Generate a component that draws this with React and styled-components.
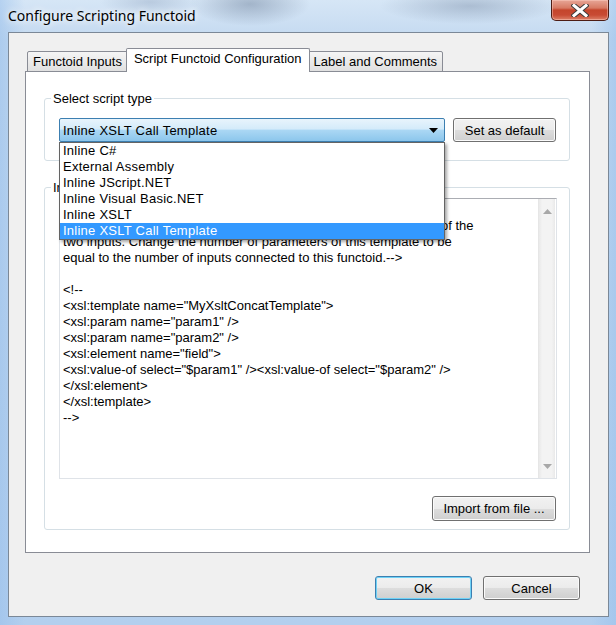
import React from "react";
import styled, { createGlobalStyle, css } from "styled-components";

const GlobalStyle = createGlobalStyle`
  html, body {
    margin: 0;
    padding: 0;
  }
  body {
    width: 616px;
    height: 625px;
    overflow: hidden;
    font-family: "Liberation Sans", Arial, sans-serif;
    font-size: 13px;
    color: #000;
  }
`;

const scriptTypes = [
  "Inline C#",
  "External Assembly",
  "Inline JScript.NET",
  "Inline Visual Basic.NET",
  "Inline XSLT",
  "Inline XSLT Call Template",
];

const scriptLines = [
  "<!--",
  "This is an example of a template which returns the concatenation of the",
  "two inputs. Change the number of parameters of this template to be",
  "equal to the number of inputs connected to this functoid.-->",
  "",
  "<!--",
  '<xsl:template name="MyXsltConcatTemplate">',
  '<xsl:param name="param1" />',
  '<xsl:param name="param2" />',
  '<xsl:element name="field">',
  '<xsl:value-of select="$param1" /><xsl:value-of select="$param2" />',
  "</xsl:element>",
  "</xsl:template>",
  "-->",
];

const tabs = ["Functoid Inputs", "Script Functoid Configuration", "Label and Comments"];

export default function App() {
  const selected = "Inline XSLT Call Template";
  return (
    <>
      <GlobalStyle />
      <Window>
        <TitleBar>
          <Title>Configure Scripting Functoid</Title>
          <CloseButton>
            <svg width="18" height="13" viewBox="0 0 18 13">
              <path
                d="M3 1.5 L15 11.5 M15 1.5 L3 11.5"
                stroke="#3b3b3b"
                strokeWidth="5"
                strokeLinecap="square"
              />
              <path
                d="M3 1.5 L15 11.5 M15 1.5 L3 11.5"
                stroke="#ffffff"
                strokeWidth="3"
                strokeLinecap="square"
              />
            </svg>
          </CloseButton>
        </TitleBar>

        <Client>
          <TabStrip>
            {tabs.map((t, i) => (
              <Tab key={t} active={i === 1}>
                {t}
              </Tab>
            ))}
          </TabStrip>
          <TabPage>
            <Group>
              <Legend>Select script type</Legend>
              <GroupBody top={12} bottom={18}>
                <ComboRow>
                  <ComboWrap>
                    <Combo>
                      <span>{selected}</span>
                      <svg width="9" height="5" viewBox="0 0 9 5">
                        <polygon points="0,0 9,0 4.5,5" fill="#000" />
                      </svg>
                    </Combo>
                    <DropList>
                      {scriptTypes.map((s) => (
                        <DropItem key={s} active={s === selected}>
                          {s}
                        </DropItem>
                      ))}
                    </DropList>
                  </ComboWrap>
                  <Button width={103} height={24}>
                    Set as default
                  </Button>
                </ComboRow>
              </GroupBody>
            </Group>

            <Group spaced>
              <Legend>Inline script buffer</Legend>
              <GroupBody top={3} bottom={8}>
                <ScriptBox>
                  <ScriptText>
                    {scriptLines.map((l, i) => (
                      <Line key={i}>{l || "\u00a0"}</Line>
                    ))}
                  </ScriptText>
                  <ScrollBar>
                    <svg width="9" height="5" viewBox="0 0 9 5">
                      <polygon points="0,5 4.5,0 9,5" fill="#a8a8a8" />
                    </svg>
                    <svg width="9" height="5" viewBox="0 0 9 5">
                      <polygon points="0,0 9,0 4.5,5" fill="#a8a8a8" />
                    </svg>
                  </ScrollBar>
                </ScriptBox>
                <ImportRow>
                  <Button width={124} height={25}>
                    Import from file ...
                  </Button>
                </ImportRow>
              </GroupBody>
            </Group>
          </TabPage>

          <DialogButtons>
            <Button width={97} height={24} isDefault>
              OK
            </Button>
            <Button width={97} height={24}>
              Cancel
            </Button>
          </DialogButtons>
        </Client>
      </Window>
    </>
  );
}

const Window = styled.div`
  width: 616px;
  height: 625px;
  box-sizing: border-box;
  display: flex;
  flex-direction: column;
  background:
    radial-gradient(ellipse 60px 22px at 250px 4px, rgba(70, 90, 120, 0.35), transparent),
    radial-gradient(ellipse 90px 18px at 470px 6px, rgba(80, 100, 130, 0.3), transparent),
    radial-gradient(ellipse 50px 14px at 150px 2px, rgba(120, 140, 170, 0.3), transparent),
    linear-gradient(to right, rgba(150, 190, 235, 0.5), rgba(255, 255, 255, 0) 4%, rgba(255, 255, 255, 0) 96%, rgba(150, 190, 235, 0.5)),
    linear-gradient(to bottom, #d6e6f6 0px, #c3d9f0 40px, #b3cfee 100%);
`;

const TitleBar = styled.div`
  height: 32px;
  display: flex;
  align-items: flex-start;
  flex-shrink: 0;
`;

const Title = styled.div`
  margin: 7px 0 0 8px;
  font-family: "Noto Sans", "Open Sans", sans-serif;
  font-size: 14px;
  line-height: 18px;
  color: #000;
  text-shadow: 0 0 6px rgba(255, 255, 255, 0.95), 0 0 10px rgba(255, 255, 255, 0.8);
`;

const CloseButton = styled.div`
  margin-left: auto;
  margin-right: 7px;
  width: 58px;
  height: 21px;
  box-sizing: border-box;
  border: 1px solid #4d1d14;
  border-top: none;
  border-radius: 0 0 5px 5px;
  display: flex;
  align-items: center;
  justify-content: center;
  background: linear-gradient(
    to bottom,
    #e7a697 0%,
    #d77a64 40%,
    #c4452c 50%,
    #c84a33 75%,
    #dc8068 100%
  );
  box-shadow: inset 0 0 0 1px rgba(255, 210, 200, 0.45);
`;

const Client = styled.div`
  margin: 0 7px 8px 8px;
  flex: 1;
  box-sizing: border-box;
  border: 1px solid #7b8897;
  background: #f0f0f0;
  padding: 15px 18px 0 16px;
  display: flex;
  flex-direction: column;
`;

const TabStrip = styled.div`
  display: flex;
  align-items: flex-end;
  height: 24px;
  padding-left: 2px;
  margin-bottom: -1px;
  position: relative;
  z-index: 1;
`;

const Tab = styled.div`
  box-sizing: border-box;
  height: 21px;
  padding: 0 5px;
  border: 1px solid #898c95;
  border-radius: 2px 2px 0 0;
  line-height: 19px;
  white-space: nowrap;
  background: linear-gradient(to bottom, #f5f5f5, #e0e0e0);
  ${(p) =>
    p.active &&
    css`
      height: 24px;
      padding: 0 7px;
      margin: 0 -2px;
      border-bottom: none;
      background: #fff;
      line-height: 20px;
      position: relative;
      z-index: 2;
    `}
`;

const TabPage = styled.div`
  height: 482px;
  box-sizing: border-box;
  border: 1px solid #898c95;
  background: #fff;
  padding: 19px 19px 0 18px;
`;

const Group = styled.fieldset`
  margin: ${(p) => (p.spaced ? "19px" : "0")} 0 0 0;
  padding: 0;
  min-width: 0;
  border: 1px solid #d5dfe5;
  border-radius: 3px;
`;

const Legend = styled.legend`
  margin-left: 6px;
  padding: 0 2px;
  line-height: 15px;
  font-size: 13px;
`;

const GroupBody = styled.div`
  padding: ${(p) => p.top}px 12px ${(p) => p.bottom}px 14px;
`;

const ComboRow = styled.div`
  display: flex;
  gap: 8px;
`;

const ComboWrap = styled.div`
  position: relative;
  width: 386px;
  letter-spacing: 0.25px;
`;

const Combo = styled.div`
  box-sizing: border-box;
  height: 24px;
  border: 1px solid #3c7fb1;
  border-radius: 2px;
  padding: 0 6px 0 3px;
  display: flex;
  align-items: center;
  justify-content: space-between;
  background: linear-gradient(
    to bottom,
    #e8f4fc 0%,
    #d4ebfa 45%,
    #aad7f4 52%,
    #8cc6ec 100%
  );
`;

const DropList = styled.div`
  position: absolute;
  top: 100%;
  left: 0;
  width: 100%;
  box-sizing: border-box;
  border: 1px solid #646464;
  background: #fff;
  box-shadow: 2px 2px 3px rgba(0, 0, 0, 0.35);
  z-index: 5;
`;

const DropItem = styled.div`
  height: 16px;
  line-height: 16px;
  padding-left: 3px;
  white-space: nowrap;
  ${(p) =>
    p.active &&
    css`
      background: #3399ff;
      color: #fff;
    `}
`;

const Button = styled.div`
  box-sizing: border-box;
  width: ${(p) => p.width}px;
  height: ${(p) => p.height}px;
  flex-shrink: 0;
  border: 1px solid #707070;
  border-radius: 3px;
  display: flex;
  align-items: center;
  justify-content: center;
  white-space: nowrap;
  background: linear-gradient(
    to bottom,
    #f2f2f2 0%,
    #ebebeb 50%,
    #dddddd 51%,
    #cfcfcf 100%
  );
  box-shadow: inset 0 0 0 1px #fbfbfb;
  ${(p) =>
    p.isDefault &&
    css`
      border-color: #3c7fb1;
      box-shadow: inset 0 0 0 1px #6fd2f6;
    `}
`;

const ScriptBox = styled.div`
  box-sizing: border-box;
  width: 498px;
  height: 281px;
  display: flex;
  border: 1px solid #dfe3e8;
  border-top-color: #abadb3;
  background: #fff;
`;

const ScriptText = styled.div`
  flex: 1;
  padding: 3px 0 0 3px;
  overflow: hidden;
`;

const Line = styled.div`
  height: 16px;
  line-height: 16px;
  white-space: pre;
`;

const ScrollBar = styled.div`
  width: 17px;
  margin: 0 1px 0 0;
  box-sizing: border-box;
  padding: 10px 0 9px;
  display: flex;
  flex-direction: column;
  align-items: center;
  justify-content: space-between;
  border-left: 1px solid #e6e6e6;
  background: linear-gradient(to right, #e9e9e9, #f3f3f3 20%, #f3f3f3 80%, #e9e9e9);
`;

const ImportRow = styled.div`
  display: flex;
  justify-content: flex-end;
  margin-top: 17px;
  padding-right: 1px;
`;

const DialogButtons = styled.div`
  display: flex;
  justify-content: flex-end;
  gap: 11px;
  margin-top: 23px;
  padding-right: 10px;
`;
